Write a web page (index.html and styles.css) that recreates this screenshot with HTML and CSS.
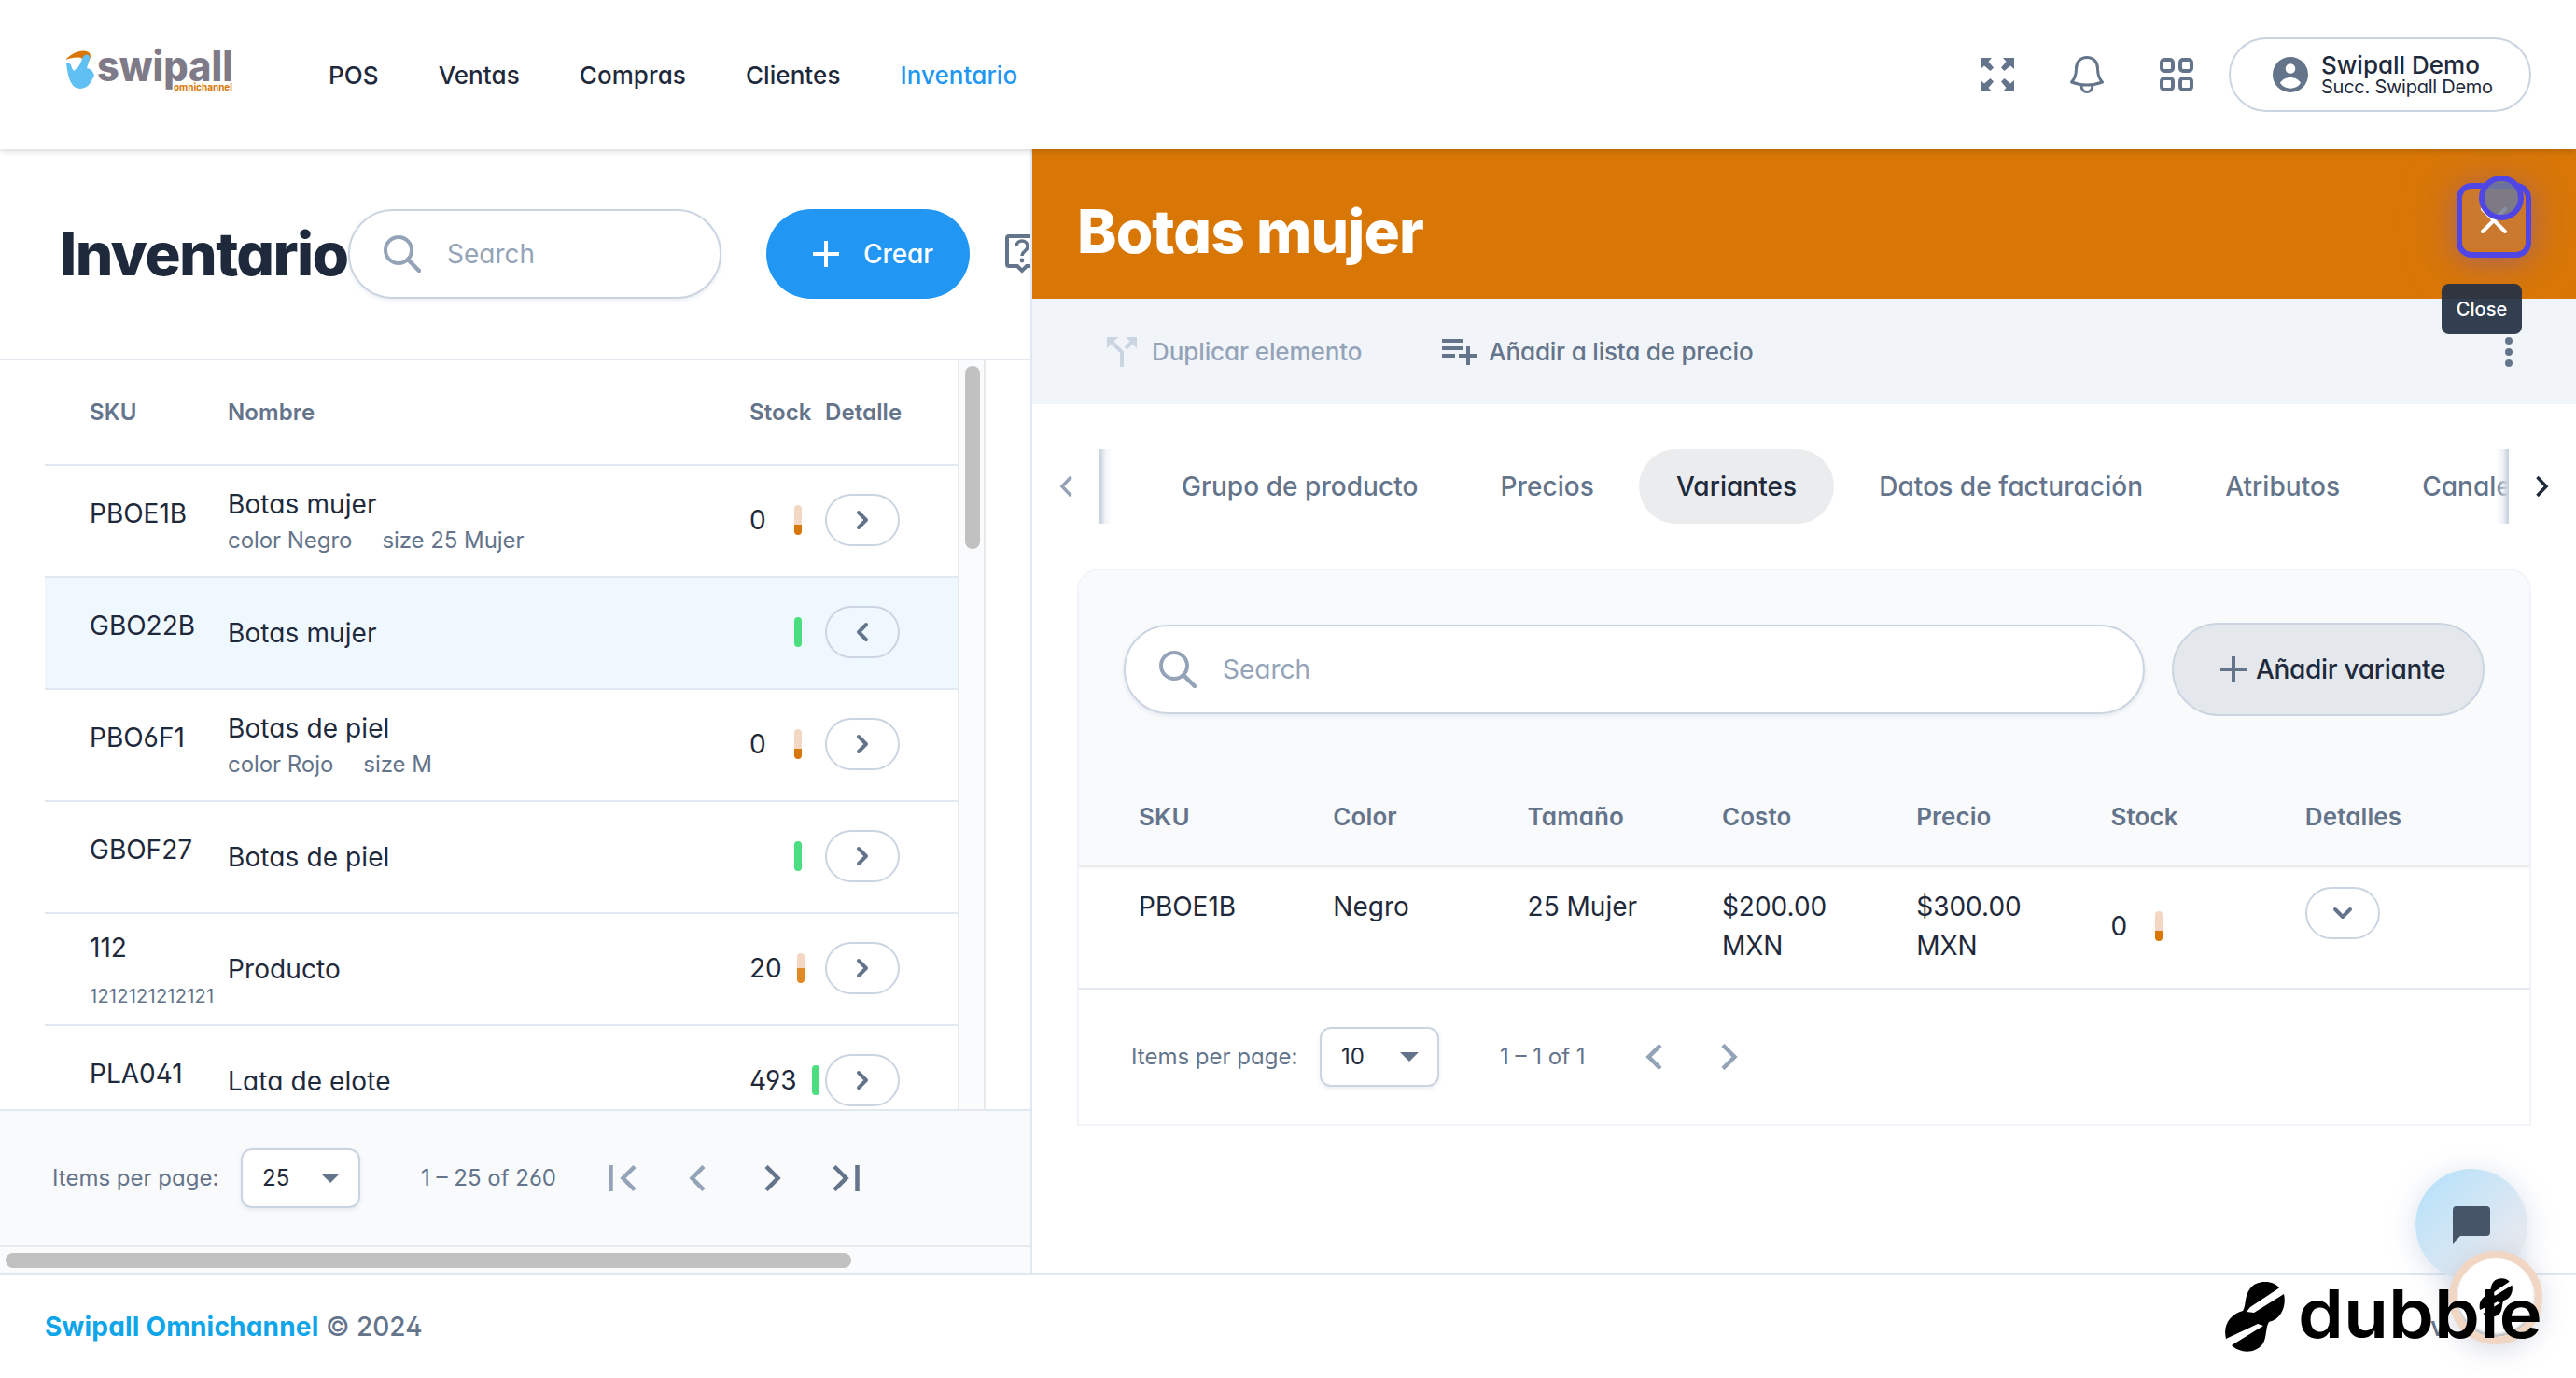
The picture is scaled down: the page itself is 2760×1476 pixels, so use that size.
FILE: index.html
```html
<!doctype html>
<html lang="es">
<head>
<meta charset="utf-8">
<title>Inventario - Swipall</title>
<link rel="stylesheet" href="styles.css">
</head>

<body>
<!-- icons -->
<svg class="sprite" width="0" height="0">
	<symbol id="right" viewBox="0 0 24 24"><path d="M8 4l8 8-8 8" fill="none" stroke="currentColor" stroke-width="4" stroke-linecap="round" stroke-linejoin="round"/></symbol>
	<symbol id="left" viewBox="0 0 24 24"><path d="M16 4l-8 8 8 8" fill="none" stroke="currentColor" stroke-width="4" stroke-linecap="round" stroke-linejoin="round"/></symbol>
	<symbol id="down" viewBox="0 0 24 24"><path d="M4 8l8 8 8-8" fill="none" stroke="currentColor" stroke-width="4" stroke-linecap="round" stroke-linejoin="round"/></symbol>
	<symbol id="search" viewBox="0 0 40 40"><circle cx="16" cy="16" r="14" fill="none" stroke="currentColor" stroke-width="4"/><path d="M26 26l12 12" stroke="currentColor" stroke-width="4.500" stroke-linecap="round"/></symbol>
	<symbol id="plus" viewBox="0 0 28 28"><path d="M14 0v28M0 14h28" stroke="currentColor" stroke-width="4"/></symbol>
	<symbol id="peanut" viewBox="0 0 65 75"><path d="M44 0c7 0 12 2.500 15 6.500L28 27l-4 5 8 1 32-20c3 13-3 27-16 30-4 6-2 17-7 24-9 11-25 9-33 1l34-21-6-2L2 61C-2 45 8 34 20 31c4-6 1-15 8-24C32 2 37 0 44 0z" fill="currentColor"/></symbol>
</svg>

<div class="header">
	<svg class="logo" viewBox="0 0 180 46">
		<path d="M0 11C8 3 18-1 25 3c4 3 1 9-2 13L17 9C11 8 6 9 0 11z" fill="#d97706"/>
		<path d="M1 15c3-2 5 0 6 5l2 3c2-2 4-3 6-6l4-9c2-4 8-3 7 2l-3 10c5 1 7 4 8 8l-5 9c-4 6-15 7-19 0C3 31 2 22 1 15z" fill="#61c0f3"/>
		<text class="logo-name" x="34" y="34" textLength="146" lengthAdjust="spacingAndGlyphs">swipall</text>
		<text class="logo-sub" x="116" y="43.500" textLength="63" lengthAdjust="spacingAndGlyphs">omnichannel</text>
	</svg>
	<div class="nav">
		<a>POS</a><a>Ventas</a><a>Compras</a><a>Clientes</a><a class="active">Inventario</a>
	</div>
	<div class="tools">
		<svg width="36" height="36" viewBox="0 0 36 36"><path d="M0 0h12L8.500 4l5.500 6.500-3.500 3.500L4 8.500 0 12zM36 0v12l-4-3.500-6.500 5.500-3.500-3.500L27.500 4 24 0zM0 36V24l4 3.500 6.500-5.500 3.500 3.500L8.500 32l3.500 4zM36 36H24l3.500-4-5.500-6.500 3.500-3.500 6.500 5.500 4-3.500z" fill="currentColor"/></svg>
		<svg width="36" height="40" viewBox="0 0 36 40"><path d="M18 1.500c-7 0-11.500 5-11.500 12 0 7-1.500 11-5 14.500 10 4 23 4 33 0-3.500-3.500-5-7.500-5-14.500 0-7-4.500-12-11.500-12zM12 31c0 10 12 10 12 0" fill="none" stroke="currentColor" stroke-width="3" stroke-linejoin="round"/></svg>
		<svg width="36" height="36" viewBox="0 0 36 36"><g fill="none" stroke="currentColor" stroke-width="4"><rect x="2" y="2" width="12" height="12" rx="3"/><rect x="22" y="2" width="12" height="12" rx="3"/><rect x="2" y="22" width="12" height="12" rx="3"/><rect x="22" y="22" width="12" height="12" rx="3"/></g></svg>
	</div>
	<div class="user">
		<svg width="38" height="38" viewBox="0 0 38 38"><circle cx="19" cy="19" r="19" fill="#64748b"/><circle cx="19" cy="12.500" r="5.300" fill="#fff"/><path d="M8 28c4-8 18-8 22 0-5 7.500-17 7.500-22 0z" fill="#fff"/></svg>
		<div>
			<div class="user-name">Swipall Demo</div>
			<div class="user-sub">Succ. Swipall Demo</div>
		</div>
	</div>
</div>

<div class="main">
	<div class="list">
		<div class="list-head">
			<h1>Inventario</h1>
			<div class="search"><svg width="40" height="40"><use href="#search"/></svg>Search</div>
			<div class="create"><svg width="28" height="28"><use href="#plus"/></svg>Crear</div>
			<svg class="help" width="36" height="42" viewBox="0 0 36 42"><path d="M2 4q0-2 2-2h28q2 0 2 2v28q0 2-2 2h-9l-5 5-5-5H4q-2 0-2-2z" fill="none" stroke="currentColor" stroke-width="4"/><path d="M12 13c0-8 12-8 12 0 0 5-6 5-6 10" fill="none" stroke="currentColor" stroke-width="3.500"/><circle cx="18" cy="28" r="2.400" fill="currentColor"/></svg>
		</div>
		<div class="list-body">
			<div class="table">
				<div class="row head"><span>SKU</span><span>Nombre</span><span>Stock</span><span>Detalle</span></div>
				<div class="row">
					<div class="sku">PBOE1B</div>
					<div class="name">Botas mujer<small><i>color Negro</i><i>size 25 Mujer</i></small></div>
					<div class="stock"><b>0</b><span class="bar low"></span></div>
					<div class="btn"><svg width="24" height="24"><use href="#right"/></svg></div>
				</div>
				<div class="row selected">
					<div class="sku">GBO22B</div>
					<div class="name">Botas mujer</div>
					<div class="stock"><b></b><span class="bar"></span></div>
					<div class="btn"><svg width="24" height="24"><use href="#left"/></svg></div>
				</div>
				<div class="row">
					<div class="sku">PBO6F1</div>
					<div class="name">Botas de piel<small><i>color Rojo</i><i>size M</i></small></div>
					<div class="stock"><b>0</b><span class="bar low"></span></div>
					<div class="btn"><svg width="24" height="24"><use href="#right"/></svg></div>
				</div>
				<div class="row">
					<div class="sku">GBOF27</div>
					<div class="name">Botas de piel</div>
					<div class="stock"><b></b><span class="bar"></span></div>
					<div class="btn"><svg width="24" height="24"><use href="#right"/></svg></div>
				</div>
				<div class="row">
					<div class="sku">112<small>1212121212121</small></div>
					<div class="name">Producto</div>
					<div class="stock"><b>20</b><span class="bar mid"></span></div>
					<div class="btn"><svg width="24" height="24"><use href="#right"/></svg></div>
				</div>
				<div class="row">
					<div class="sku">PLA041</div>
					<div class="name">Lata de elote</div>
					<div class="stock"><b>493</b><span class="bar"></span></div>
					<div class="btn"><svg width="24" height="24"><use href="#right"/></svg></div>
				</div>
			</div>
			<div class="vscroll"><div></div></div>
		</div>
		<div class="pager">
			<span class="pager-label">Items per page:</span>
			<div class="select">25<i></i></div>
			<span class="range">1 – 25 of 260</span>
			<svg class="off" width="30" height="28" viewBox="0 0 30 28"><path d="M2.500 0v28M28 1.500L15.500 14 28 26.500" fill="none" stroke="currentColor" stroke-width="4.500"/></svg>
			<svg class="off" width="18" height="28" viewBox="0 0 18 28"><path d="M16 1.500L3.500 14 16 26.500" fill="none" stroke="currentColor" stroke-width="4.500"/></svg>
			<svg width="18" height="28" viewBox="0 0 18 28"><path d="M2 1.500L14.500 14 2 26.500" fill="none" stroke="currentColor" stroke-width="4.500"/></svg>
			<svg width="30" height="28" viewBox="0 0 30 28"><path d="M26.500 0v28M2 1.500L14.500 14 2 26.500" fill="none" stroke="currentColor" stroke-width="4.500"/></svg>
		</div>
		<div class="hscroll"><div></div></div>
	</div>

	<div class="detail">
		<div class="detail-head">
			<h2>Botas mujer</h2>
			<div class="close">
				<svg width="28" height="28" viewBox="0 0 28 28"><path d="M2 2l24 24M26 2L2 26" stroke="#fff" stroke-width="4" stroke-linecap="round"/></svg>
				<span class="cursor"></span>
				<span class="tooltip">Close</span>
			</div>
		</div>
		<div class="toolbar">
			<div class="tool off">
				<svg width="32" height="32" viewBox="0 0 32 32"><path d="M20 0h12v12l-4.500-4.500-6 6-3-3 6-6zM12 0H0v12l4.500-4.500 9.500 9.500V32h4V15.500L7.500 4.500z" fill="currentColor"/></svg>
				Duplicar elemento
			</div>
			<div class="tool">
				<svg width="38" height="28" viewBox="0 0 38 28"><path d="M0 2h22M0 10h22M0 18h14M18 18h20M28 8v20" stroke="currentColor" stroke-width="4"/></svg>
				Añadir a lista de precio
			</div>
			<div class="dots"><i></i><i></i><i></i></div>
		</div>
		<div class="tabs">
			<div class="prev"><svg width="14" height="22" viewBox="0 0 14 22"><path d="M12.500 1L3 11l9.500 10" fill="none" stroke="currentColor" stroke-width="3.500"/></svg></div>
			<div class="tab-list">
				<div class="tab">Grupo de producto</div>
				<div class="tab">Precios</div>
				<div class="tab on">Variantes</div>
				<div class="tab">Datos de facturación</div>
				<div class="tab">Atributos</div>
				<div class="tab">Canales</div>
			</div>
			<div class="next"><svg width="14" height="22" viewBox="0 0 14 22"><path d="M1.500 1L11 11 1.500 21" fill="none" stroke="currentColor" stroke-width="3.500"/></svg></div>
		</div>
		<div class="card">
			<div class="card-top">
				<div class="search wide"><svg width="40" height="40"><use href="#search"/></svg>Search</div>
				<div class="add"><svg width="28" height="28"><use href="#plus"/></svg>Añadir variante</div>
			</div>
			<div class="vrow vhead"><span>SKU</span><span>Color</span><span>Tamaño</span><span>Costo</span><span>Precio</span><span>Stock</span><span>Detalles</span></div>
			<div class="vrow vdata">
				<span>PBOE1B</span>
				<span>Negro</span>
				<span>25 Mujer</span>
				<span>$200.00<br>MXN</span>
				<span>$300.00<br>MXN</span>
				<div class="stock"><b>0</b><span class="bar low"></span></div>
				<div class="btn"><svg width="24" height="24"><use href="#down"/></svg></div>
			</div>
			<div class="pager">
				<span class="pager-label">Items per page:</span>
				<div class="select">10<i></i></div>
				<span class="range">1 – 1 of 1</span>
				<svg class="off" width="18" height="28" viewBox="0 0 18 28"><path d="M16 1.500L3.500 14 16 26.500" fill="none" stroke="currentColor" stroke-width="4.500"/></svg>
				<svg class="off" width="18" height="28" viewBox="0 0 18 28"><path d="M2 1.500L14.500 14 2 26.500" fill="none" stroke="currentColor" stroke-width="4.500"/></svg>
			</div>
		</div>
	</div>
</div>

<div class="footer">
	<b>Swipall Omnichannel</b>&nbsp;© 2024
	<span class="version">v</span>
</div>

<div class="chat"><svg width="40" height="40" viewBox="0 0 40 40"><path d="M4 0h32q4 0 4 4v24q0 4-4 4H8l-8 8V4q0-4 4-4z" fill="#475569"/></svg></div>
<div class="recorder"><svg width="36" height="42"><use href="#peanut"/></svg></div>
<svg class="dubble" viewBox="0 0 342 76">
	<use href="#peanut" width="65" height="75"/>
	<text x="79" y="60" textLength="262" lengthAdjust="spacingAndGlyphs">dubble</text>
</svg>
</body>
</html>
```
FILE: styles.css
```css
*{ margin: 0; padding: 0; box-sizing: border-box;}
body{ width: 2760px; height: 1476px; overflow: hidden; position: relative; display: flex; flex-direction: column; background: #fff; color: #1e293b; font: 400 28px/42px Inter, "Liberation Sans", sans-serif; font-feature-settings: "cv02","cv03","cv04","cv11"; -webkit-font-smoothing: antialiased;}
i{ font-style: normal;}
svg{ flex: none; display: block;}
.sprite{ position: absolute;}

/* header */
.header{ height: 160px; flex: none; display: flex; align-items: center; padding: 0 48px 0 70px; box-shadow: 0 2px 6px rgba(0,0,0,.16); position: relative; z-index: 2; background: #fff;}
.logo{ width: 180px; height: 46px; margin-bottom: 8px; overflow: visible;}
.logo-name{ font: 800 45px Inter, sans-serif; fill: #7f7a88;}
.logo-sub{ font: 700 11px Inter, sans-serif; fill: #d97706;}
.nav{ display: flex; gap: 64px; margin-left: 102px; padding-top: 1px; font-size: 26px; font-weight: 500; letter-spacing: .08px;}
.nav .active{ color: #2196f3;}
.tools{ margin-left: auto; display: flex; align-items: center; gap: 60px; color: #64748b;}
.user{ width: 324px; height: 80px; margin-left: 38px; padding-left: 45px; border: 2px solid #cbd5e1; border-radius: 40px; display: flex; align-items: center; gap: 14px; white-space: nowrap;}
.user-name{ font-size: 26px; font-weight: 500; line-height: 25px; padding-top: 1px;}
.user-sub{ font-size: 20px; line-height: 22px; letter-spacing: -.25px;}

.main{ height: 1204px; flex: none; display: flex;}

/* left list */
.list{ width: 1106px; flex: none; border-right: 2px solid #e2e8f0; display: flex; flex-direction: column; overflow: hidden;}
.list-head{ height: 226px; flex: none; border-bottom: 2px solid #e2e8f0; display: flex; align-items: center; padding-left: 64px; overflow: hidden;}
h1{ width: 309px; flex: none; font-size: 64px; font-weight: 800; line-height: 80px; letter-spacing: -1.6px;}
.search{ width: 400px; height: 96px; flex: none; display: flex; align-items: center; gap: 28px; padding-left: 36px; border: 2px solid #cbd5e1; border-radius: 48px; background: #fff; color: #94a3b8; box-shadow: 0 2px 4px rgba(148,163,184,.2);}
.create{ width: 218px; height: 96px; flex: none; margin-left: 48px; padding-left: 50px; border-radius: 48px; display: flex; align-items: center; gap: 26px; background: #2196f3; color: #fff; font-weight: 500; letter-spacing: -.1px;}
.help{ margin-left: 38px; color: #64748b;}
.list-body{ height: 802px; flex: none; padding-left: 48px; display: flex; overflow: hidden;}
.table{ width: 978px;}
.row{ height: 120px; padding-left: 48px; display: grid; grid-template-columns: 148px 559px 81px auto; align-items: center; border-bottom: 2px solid #e2e8f0;}
.row.head{ height: 113px; font-size: 24px; font-weight: 600; letter-spacing: .1px; color: #64748b;}
.row.selected{ background: #f0f8ff;}
.sku{ padding-bottom: 17px;}
.sku small{ display: block; margin: 16px 0 -17px; font-size: 20px; line-height: 30px; letter-spacing: .25px; color: #64748b;}
.name{ letter-spacing: .1px;}
.name small{ display: flex; gap: 32px; font-size: 24px; line-height: 36px; letter-spacing: -.05px; color: #64748b;}
.stock{ display: flex; align-items: center;}
.stock b{ min-width: 32px; font-weight: 400;}
.bar{ width: 8px; height: 32px; flex: none; margin-left: 16px; border-radius: 4px; background: #4ade80;}
.bar.low{ background: linear-gradient(#f3d6c3 66%, #d97706 66%);}
.bar.mid{ background: linear-gradient(#f3d6c3 50%, #e08a24 50%);}
.btn{ width: 80px; height: 56px; border: 2px solid #cbd5e1; border-radius: 28px; display: flex; align-items: center; justify-content: center; color: #64748b;}
.row .stock, .row .btn{ margin-bottom: 3px;}
.vscroll{ width: 30px; border: solid #e8eaed; border-width: 0 2px; background: #fafbfc; padding: 6px;}
.vscroll div{ width: 16px; height: 196px; border-radius: 8px; background: #c1c1c1;}
.list .pager{ height: 146px; flex: none; border-top: 2px solid #e2e8f0; padding-left: 56px; background: #f8fafc;}
.hscroll{ flex: 1; border: solid #e8eaed; border-width: 2px 0; background: #fafbfc; padding: 6px;}
.hscroll div{ width: 906px; height: 16px; border-radius: 8px; background: #c1c1c1;}

.pager{ display: flex; align-items: center; font-size: 24px; color: #64748b;}
.pager-label{ width: 202px;}
.select{ width: 128px; height: 64px; padding: 0 20px 0 21px; border: 2px solid #cbd5e1; border-radius: 12px; background: #fff; color: #1e293b; display: flex; align-items: center; justify-content: space-between; box-shadow: 0 2px 4px rgba(148,163,184,.2);}
.select i{ border: 10px solid transparent; border-top-color: #64748b; border-bottom: 0;}
.range{ width: 145px; margin: 0 56px 0 65px; white-space: nowrap;}
.pager svg{ margin-right: 56px;}
.pager svg + svg{ margin-right: 63px;}
.pager svg + svg + svg{ margin-right: 55px;}
.off{ color: #94a3b8;}

/* right panel */
.detail{ flex: 1; min-width: 0;}
.detail-head{ height: 160px; padding: 36px 48px 0; display: flex; justify-content: space-between; background: #d97706;}
h2{ font-size: 64px; font-weight: 800; line-height: 104px; letter-spacing: -.9px; color: #fff;}
.close{ width: 80px; height: 80px; position: relative; display: flex; align-items: center; justify-content: center; border: 6px solid #4f46e5; border-radius: 16px; background: rgba(198,122,62,.75); box-shadow: 0 4px 28px rgba(140,90,140,.5), 0 0 60px rgba(170,110,130,.4), inset 0 0 4px #d97706;}
.cursor{ position: absolute; left: 18px; top: -14px; width: 48px; height: 48px; border: 6px solid #4f46e5; border-radius: 50%; background: rgba(112,122,148,.85);}
.tooltip{ position: absolute; left: -22px; top: 102px; width: 86px; height: 54px; border-radius: 8px; background: rgba(36,48,68,.93); color: #fff; font-size: 20px; font-weight: 500; line-height: 54px; text-align: center; z-index: 2;}
.toolbar{ height: 113px; padding: 0 68px 0 80px; display: flex; align-items: center; background: #f1f5f9; font-size: 26px; font-weight: 500; letter-spacing: -.12px; color: #64748b;}
.tool{ display: flex; align-items: center; gap: 12px; margin-right: 86px; letter-spacing: -.2px;}
.tool.off{ color: #94a3b8; gap: 16px; letter-spacing: -.1px;}
.tool.off svg{ color: #cbd5e1;}
.dots{ margin-left: auto; display: flex; flex-direction: column; gap: 4px;}
.dots i{ width: 8px; height: 8px; border-radius: 50%; background: #64748b;}
.tabs{ height: 80px; margin: 48px 0; display: flex;}
.prev, .next{ width: 72px; display: flex; align-items: center; justify-content: center; color: #94a3b8;}
.next{ color: #1e293b;}
.tab-list{ flex: 1; min-width: 0; display: flex; gap: 8px; padding-left: 48px; overflow: hidden; white-space: nowrap; font-weight: 500; letter-spacing: .06px; color: #64748b; position: relative;}
/* edge shadows of the scrolled tabs */
.tab-list:before, .tab-list:after{ content: ""; position: absolute; top: 0; bottom: 0; width: 14px;}
.tab-list:before{ left: 0; background: linear-gradient(to right, #cbd5e1 10%, rgba(233,238,243,.6) 45%, transparent);}
.tab-list:after{ right: 0; background: linear-gradient(to left, #cbd5e1 10%, rgba(226,232,240,.6) 45%, transparent);}
.tab{ flex: none; padding: 0 40px; border-radius: 40px; line-height: 80px;}
.tab.on{ background: #ebecee; color: #1e293b;}
.card{ width: 1558px; height: 597px; margin-left: 48px; border: 2px solid #f1f5f9; border-radius: 24px 24px 0 0; background: #fff; overflow: hidden;}
.card-top{ height: 212px; padding: 0 48px; display: flex; align-items: center; justify-content: space-between; background: #f8fafc;}
.search.wide{ width: 1094px;}
.add{ width: 335px; height: 100px; padding-left: 50px; border: 2px solid #cbd5e1; border-radius: 50px; display: flex; align-items: center; gap: 10px; background: #e4e8ed; font-weight: 500; letter-spacing: -.3px;}
.add svg{ color: #64748b;}
.vrow{ display: grid; grid-template-columns: repeat(7, 208.3px); padding-left: 64px;}
.vhead{ height: 103px; align-items: center; font-size: 26px; font-weight: 600; letter-spacing: .1px; color: #64748b; position: relative; background: #f8fafc;}
/* shadow only under the header row */
.vhead:after{ content: ""; position: absolute; left: 0; right: 0; top: 100%; height: 5px; background: linear-gradient(rgba(0,0,0,.12), transparent);}
.vdata{ height: 134px; padding-top: 24px; border-bottom: 2px solid #e2e8f0;}
.vdata .stock{ height: 84px;}
.card .pager{ height: 144px; padding-left: 56px;}
.card .range{ width: 92px; margin-right: 64px;}
.card .pager svg{ margin-right: 63px;}

/* footer */
.footer{ flex: 1; border-top: 2px solid #e2e8f0; padding: 0 48px; display: flex; align-items: center; font-weight: 500; color: #64748b;}
.footer b{ font-weight: 700; letter-spacing: .2px; color: #0ea5e9;}
.version{ margin-left: auto; margin-right: 92px;}

.chat{ position: absolute; left: 2588px; top: 1252px; width: 120px; height: 120px; border-radius: 50%; display: flex; align-items: center; justify-content: center; background: linear-gradient(135deg, #b3e0fa, #c9e5f6 35%, #e2e8f0 72%, #ededed); box-shadow: 0 4px 30px rgba(100,130,180,.25); z-index: 2;}
.recorder{ position: absolute; left: 2624px; top: 1340px; width: 100px; height: 100px; border: 8px solid #f2d6c4; border-radius: 50%; display: flex; align-items: center; justify-content: center; background: #fff; color: #000; box-shadow: 0 6px 28px rgba(100,110,150,.25), inset 0 -3px 3px #bbb; z-index: 2;}
.dubble{ position: absolute; left: 2383px; top: 1373px; width: 342px; height: 76px; overflow: visible; z-index: 3; color: #000;}
.dubble text{ font: 600 72px Inter, sans-serif;}
```
